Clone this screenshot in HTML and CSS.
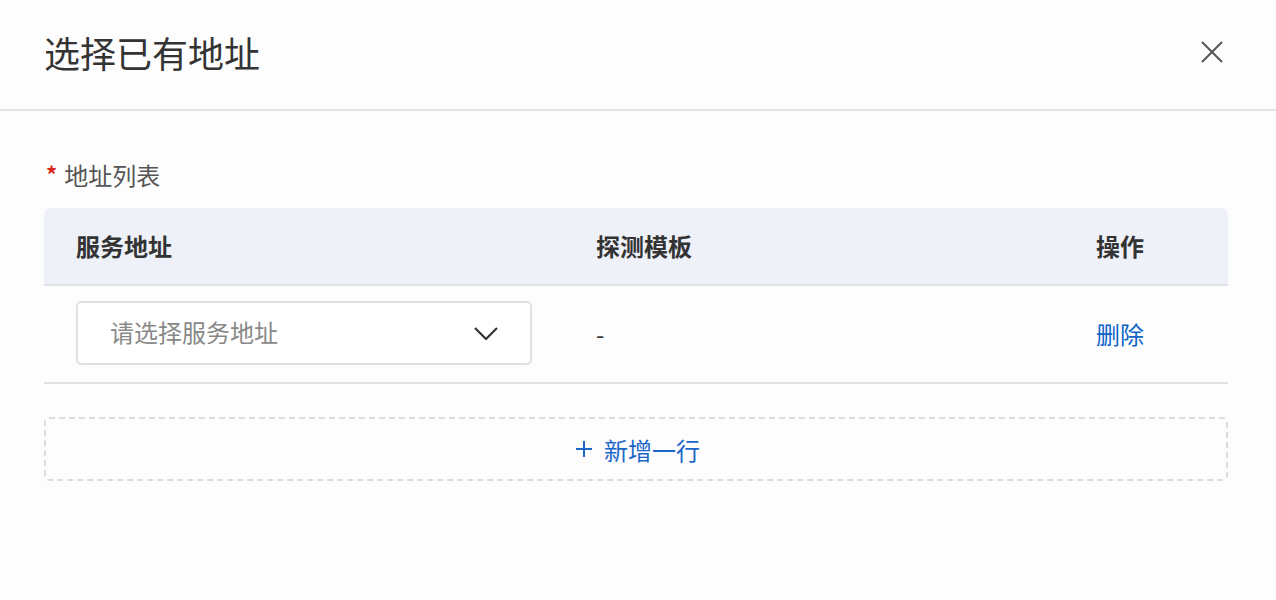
FILE: index.html
```html
<!DOCTYPE html>
<html lang="zh">
<head>
<meta charset="utf-8">
<title>选择已有地址</title>
<link rel="stylesheet" href="styles.css">
</head>
<body>
<div class="dialog">
  <div class="dialog-header">
    <h1 class="dialog-title">选择已有地址</h1>
    <button class="close-btn" aria-label="关闭">
      <svg width="24" height="24" viewBox="0 0 24 24"><path d="M2 2 L22 22 M22 2 L2 22" stroke="#555" stroke-width="2" fill="none"/></svg>
    </button>
  </div>
  <div class="dialog-body">
    <div class="field-label"><span class="required">*</span>地址列表</div>
    <div class="table">
      <div class="row head">
        <div class="cell c1">服务地址</div>
        <div class="cell c2">探测模板</div>
        <div class="cell c3">操作</div>
      </div>
      <div class="row body-row">
        <div class="cell c1">
          <div class="select">
            <span class="placeholder">请选择服务地址</span>
            <svg class="chevron" width="24" height="14" viewBox="0 0 24 14"><path d="M1 1 L12 12 L23 1" stroke="#333" stroke-width="2.2" fill="none"/></svg>
          </div>
        </div>
        <div class="cell c2 dash">-</div>
        <div class="cell c3"><a class="link">删除</a></div>
      </div>
    </div>
    <button class="add-row">
      <svg width="16" height="16" viewBox="0 0 16 16"><path d="M8 0 V16 M0 8 H16" stroke="#1a66c8" stroke-width="2" fill="none"/></svg>
      <span>新增一行</span>
    </button>
  </div>
</div>
</body>
</html>
```

FILE: styles.css
```css
* { box-sizing: border-box; }
html, body { margin: 0; padding: 0; }
body {
  background: #fdfdfd;
  font-family: "Noto Sans CJK SC", "Noto Sans", sans-serif;
  color: #333;
  width: 1276px;
  height: 600px;
  overflow: hidden;
}
.dialog { width: 1276px; }
.dialog-header {
  height: 111px;
  border-bottom: 2px solid #e4e4e4;
  display: flex;
  align-items: center;
  justify-content: space-between;
  padding: 0 52px 6px 44px;
}
.dialog-title {
  margin: 0;
  font-size: 36px;
  font-weight: 400;
  color: #333;
  line-height: 1;
}
.close-btn {
  background: none;
  border: 0;
  padding: 0;
  width: 24px;
  height: 24px;
  display: flex;
}
.dialog-body {
  padding: 48px 48px 0 44px;
}
.field-label {
  font-size: 24px;
  color: #555;
  line-height: 32px;
  height: 32px;
  display: flex;
  align-items: center;
}
.required {
  color: #d6281e;
  font-size: 22px;
  font-weight: 700;
  margin: 0 7px 0 2px;
  position: relative;
  top: -2px;
}
.table {
  margin-top: 17px;
}
.row {
  display: grid;
  grid-template-columns: 520px 500px 164px;
  align-items: center;
}
.row.head {
  height: 78px;
  background: #eef1f8;
  border-radius: 6px 6px 0 0;
  border-bottom: 2px solid #e2e3e6;
  font-weight: 700;
  font-size: 24px;
  color: #333;
}
.row.body-row {
  height: 98px;
  border-bottom: 2px solid #e2e2e2;
  padding-bottom: 2px;
}
.cell { padding-left: 32px; }
.head .cell { line-height: 32px; }
.select {
  width: 456px;
  height: 64px;
  border: 2px solid #e0e0e0;
  border-radius: 5px;
  background: #fff;
  display: flex;
  align-items: center;
  justify-content: space-between;
  padding: 0 32px 3px 32px;
}
.placeholder {
  font-size: 24px;
  color: #888;
}
.chevron { margin-top: 5px; }
.dash {
  font-size: 24px;
  color: #333;
}
.link {
  font-size: 24px;
  color: #0a64c8;
  cursor: pointer;
}
.add-row {
  margin-top: 33px;
  width: 1184px;
  height: 64px;
  border: 2px dashed #dcdcdc;
  border-radius: 5px;
  background: transparent;
  display: flex;
  align-items: center;
  justify-content: center;
  gap: 12px;
  font-family: inherit;
  font-size: 24px;
  color: #1a66c8;
  padding: 0 0 0 4px;
}
```
